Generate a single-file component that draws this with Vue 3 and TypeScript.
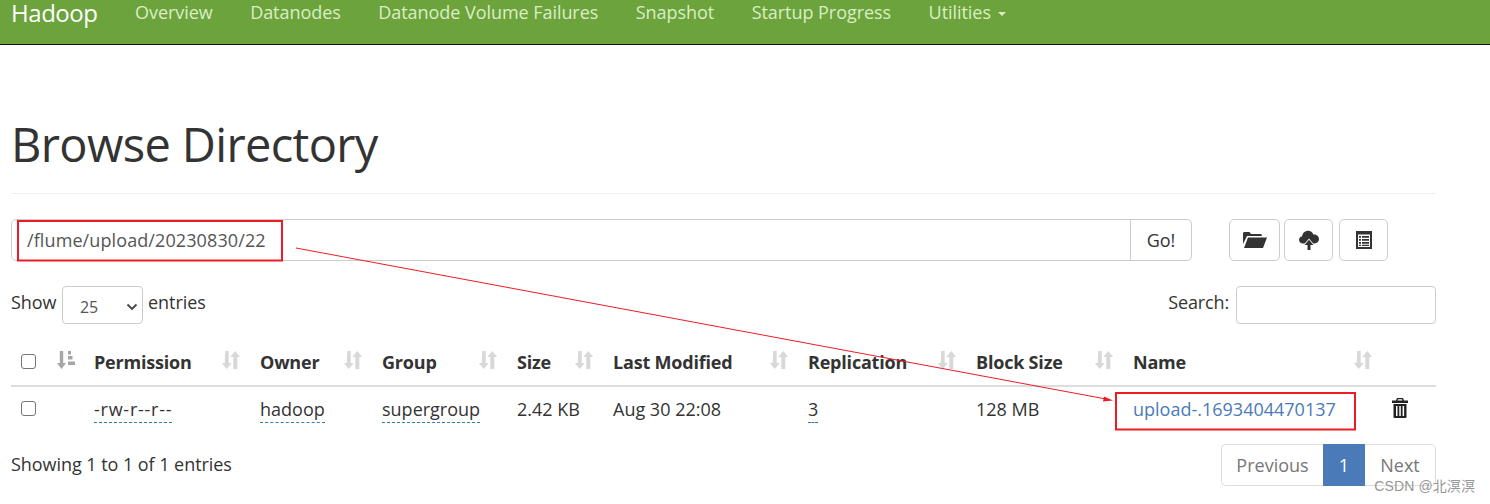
<script setup lang="ts">
const navItems: string[] = ['Overview', 'Datanodes', 'Datanode Volume Failures', 'Snapshot', 'Startup Progress']
const columns: { label: string; sorted?: boolean }[] = [
  { label: 'Permission' }, { label: 'Owner' }, { label: 'Group' }, { label: 'Size' },
  { label: 'Last Modified' }, { label: 'Replication' }, { label: 'Block Size' }, { label: 'Name' },
]
</script>

<template>
  <div class="page">
    <nav class="navbar">
      <a class="brand">Hadoop</a>
      <a v-for="n in navItems" :key="n" class="nav-link">{{ n }}</a>
      <a class="nav-link">Utilities <span class="caret"></span></a>
    </nav>

    <main class="container">
      <h1 class="title">Browse Directory</h1>

      <div class="toolbar">
        <div class="path-group">
          <div class="path-input">/flume/upload/20230830/22</div>
          <div class="go">Go!</div>
        </div>
        <div class="tools">
          <div class="tool tool-a">
            <svg width="24" height="18" viewBox="0 0 24 18"><path fill="#333" d="M1 17 5 6.500h19L20 17zM0 13V2.500C0 1.600.6 1 1.500 1h5l1.500 2h9.500c.8 0 1.300.5 1.300 1.300V5H4z"/></svg>
          </div>
          <div class="tool tool-b">
            <svg width="20" height="20" viewBox="0 0 20 20"><path fill="#333" d="M4 13.500C1.800 13.500 0 12 0 9.800 0 8 1.300 6.600 3 6.400 3.600 3 6 .8 9 .8c2.600 0 4.600 1.500 5.400 3.700 3-.3 5.600 1.700 5.600 4.600 0 2.500-2 4.400-4.500 4.400z"/><path fill="#333" stroke="#fff" stroke-width="1.600" paint-order="stroke" d="M10 9.800 14.500 15h-3v5h-3v-5h-3z"/></svg>
          </div>
          <div class="tool tool-c">
            <svg width="18" height="18" viewBox="0 0 18 18"><path fill="#333" fill-rule="evenodd" d="M1 0h16v18H1zM3 3.500v12.500h12V3.500z"/><path fill="#333" d="M4 5h2v1.800H4zM7 5h7v1.800H7zM4 8h2v1.800H4zM7 8h7v1.800H7zM4 11h2v1.800H4zM7 11h7v1.800H7zM4 13.800h2v1.200H4zM7 13.800h7v1.200H7z"/></svg>
          </div>
        </div>
      </div>

      <div class="controls">
        <div class="show">
          <span>Show</span>
          <div class="select"><span>25</span>
            <svg width="12" height="8" viewBox="0 0 12 8"><path d="M1.500 1.500 6 6l4.500-4.500" fill="none" stroke="#444" stroke-width="1.800"/></svg>
          </div>
          <span>entries</span>
        </div>
        <div class="search"><span>Search:</span><div class="search-box"></div></div>
      </div>

      <table class="table">
        <colgroup>
          <col style="width:36px"><col style="width:37px"><col style="width:166px"><col style="width:122px">
          <col style="width:135px"><col style="width:96px"><col style="width:195px"><col style="width:168px">
          <col style="width:157px"><col style="width:259px"><col style="width:54px">
        </colgroup>
        <thead>
          <tr>
            <th><span class="check"></span></th>
            <th>
              <svg class="sort-main" width="18" height="18" viewBox="0 0 18 18"><path fill="#a6a6a6" d="M2.800 0h3.400v12H9l-4.500 6L0 12h2.800zM11 0h3v3.500h-3zM11 5h4.500v3.500H11zM11 10.500h7v3.500h-7z"/></svg>
            </th>
            <th v-for="c in columns" :key="c.label">
              <div class="th-inner">
                <span>{{ c.label }}</span>
                <svg width="18" height="18" viewBox="0 0 18 18"><path fill="#d8d8d8" d="M3.300 0h3.400v12h3l-5 6-5-6h3zM11.300 18V6h-3l5-6 5 6h-3v12z"/></svg>
              </div>
            </th>
            <th></th>
          </tr>
        </thead>
        <tbody>
          <tr>
            <td><span class="check"></span></td>
            <td></td>
            <td><span class="editable perm">-rw-r--r--</span></td>
            <td><span class="editable">hadoop</span></td>
            <td><span class="editable">supergroup</span></td>
            <td>2.42 KB</td>
            <td>Aug 30 22:08</td>
            <td><span class="editable">3</span></td>
            <td>128 MB</td>
            <td><a class="link">upload-.1693404470137</a></td>
            <td>
              <svg class="trash" width="16" height="20" viewBox="0 0 16 20"><path fill="#222" fill-rule="evenodd" d="M5 0h6l1 2.500h4V5H0V2.500h4zM6 1.300 5.500 2.500h5L10 1.300zM1.500 6h13v13c0 .6-.4 1-1 1h-11c-.6 0-1-.4-1-1zM4 8v10h1.500V8zM7.300 8v10h1.500V8zM10.600 8v10h1.500V8z"/></svg>
            </td>
          </tr>
        </tbody>
      </table>

      <div class="footer">
        <span class="info">Showing 1 to 1 of 1 entries</span>
        <div class="pager">
          <span class="pg prev">Previous</span>
          <span class="pg cur">1</span>
          <span class="pg next">Next</span>
        </div>
      </div>
    </main>

    <svg class="annot" width="1490" height="504" viewBox="0 0 1490 504">
      <rect x="18" y="221" width="264" height="39.500" fill="none" stroke="#ed1c24" stroke-width="2"/>
      <rect x="1116" y="393" width="239" height="36.500" fill="none" stroke="#ed1c24" stroke-width="2"/>
      <path d="M296 248 1106 399" stroke="#ed1c24" stroke-width="1" fill="none"/>
      <path d="M1113 400.500 1104 396.500 1103 401.500z" fill="#ed1c24"/>
    </svg>
    <div class="mark">CSDN @北溟溟</div>
  </div>
</template>

<style>
html, body { margin: 0; background: #fff; }
</style>

<style scoped>
.page {
  position: relative;
  width: 1490px;
  height: 504px;
  overflow: hidden;
  font-family: "Open Sans", "Noto Sans", sans-serif;
  font-size: 18px;
  letter-spacing: 0;
  color: #333;
}
.navbar {
  height: 44px;
  background: #6ca33c;
  border-bottom: 1px solid #111;
  display: flex;
  align-items: flex-start;
  padding-left: 11px;
  line-height: 24px;
  box-sizing: content-box;
}
.brand { color: #fff; font-size: 24px; width: 124px; letter-spacing: -0.45px; line-height: 26px; }
.nav-link { color: #d9efc3; margin-right: 37.5px; letter-spacing: -0.05px; }
.caret {
  display: inline-block;
  border-top: 4px solid #d9efc3;
  border-left: 4px solid transparent;
  border-right: 4px solid transparent;
  vertical-align: middle;
  margin-left: 2px;
}
.container { width: 1425px; margin-left: 11px; }
.title {
  margin: 0;
  height: 149px;
  box-sizing: border-box;
  padding-top: 66px;
  font-size: 47px;
  line-height: 66px;
  font-weight: 400;
  letter-spacing: -0.65px;
  border-bottom: 1px solid #eee;
}
.toolbar { display: flex; margin-top: 25px; height: 42px; }
.path-group {
  width: 1181px;
  display: flex;
  box-sizing: border-box;
  border: 1px solid #ccc;
  border-radius: 5px;
}
.path-input { flex: 1; padding-left: 15px; line-height: 40px; color: #555; letter-spacing: 0.1px; }
.go { width: 60px; border-left: 1px solid #ccc; text-align: center; line-height: 40px; }
.tools { display: flex; margin-left: 37px; }
.tool {
  box-sizing: border-box;
  height: 42px;
  border: 1px solid #ccc;
  border-radius: 5px;
  display: flex;
  align-items: center;
  justify-content: center;
}
.tool-a { width: 51px; }
.tool-b { width: 49px; margin-left: 4px; }
.tool-c { width: 49px; margin-left: 6px; }
.controls {
  display: flex;
  justify-content: space-between;
  margin-top: 25px;
  height: 38px;
  align-items: flex-start;
  line-height: 32px;
}
.show, .search { display: flex; align-items: flex-start; }
.show { letter-spacing: -0.05px; }
.select {
  box-sizing: border-box;
  width: 81px;
  height: 38px;
  margin: 0 5px 0 5.5px;
  border: 1px solid #ccc;
  border-radius: 4px;
  display: flex;
  align-items: center;
  justify-content: space-between;
  padding: 4px 4px 0 17px;
  font-size: 16px;
  color: #555;
}
.search { letter-spacing: -0.15px; }
.search-box {
  box-sizing: border-box;
  width: 200px;
  height: 38px;
  margin-left: 7px;
  border: 1px solid #ccc;
  border-radius: 4px;
}
.table {
  width: 1425px;
  table-layout: fixed;
  border-collapse: collapse;
  margin-top: 18px;
}
th, td { padding: 0 0 0 10px; text-align: left; vertical-align: middle; }
th {
  height: 44px;
  padding-bottom: 4px;
  box-sizing: border-box;
  border-bottom: 2px solid #ddd;
  font-weight: 700;
  letter-spacing: -0.2px;
}
td { height: 46px; padding-bottom: 2px; box-sizing: border-box; }
.th-inner { display: flex; justify-content: space-between; align-items: center; padding-right: 10px; }
.th-inner svg, .sort-main { margin-bottom: 3px; }
.trash { margin-bottom: 2px; }
.check {
  display: block;
  width: 13px;
  height: 13px;
  border: 1px solid #767676;
  border-radius: 3px;
  background: #fff;
}
.editable { border-bottom: 1px dashed #337ab7; padding-bottom: 1px; }
.perm { letter-spacing: 0.75px; }
.link { color: #4a7ab7; }
td svg, th svg { display: block; }
.footer {
  display: flex;
  justify-content: space-between;
  align-items: flex-start;
  margin-top: 12px;
  line-height: 40px;
}
.info { letter-spacing: -0.05px; }
.pager { display: flex; height: 42px; }
.pg { box-sizing: border-box; height: 42px; line-height: 40px; text-align: center; border: 1px solid #ddd; color: #777; }
.prev { width: 102px; border-right: 0; border-radius: 5px 0 0 5px; }
.cur { width: 42px; background: #4a7ab7; border-color: #4a7ab7; color: #fff; }
.next { width: 71px; border-left: 0; border-radius: 0 5px 5px 0; }
.annot { position: absolute; left: 0; top: 0; pointer-events: none; }
.mark {
  position: absolute;
  right: 15px;
  top: 477px;
  font-family: "Liberation Sans", "Noto Sans CJK SC", sans-serif;
  font-size: 14px;
  line-height: 18px;
  letter-spacing: 0.1px;
  color: rgba(130, 130, 130, 0.85);
}
</style>
